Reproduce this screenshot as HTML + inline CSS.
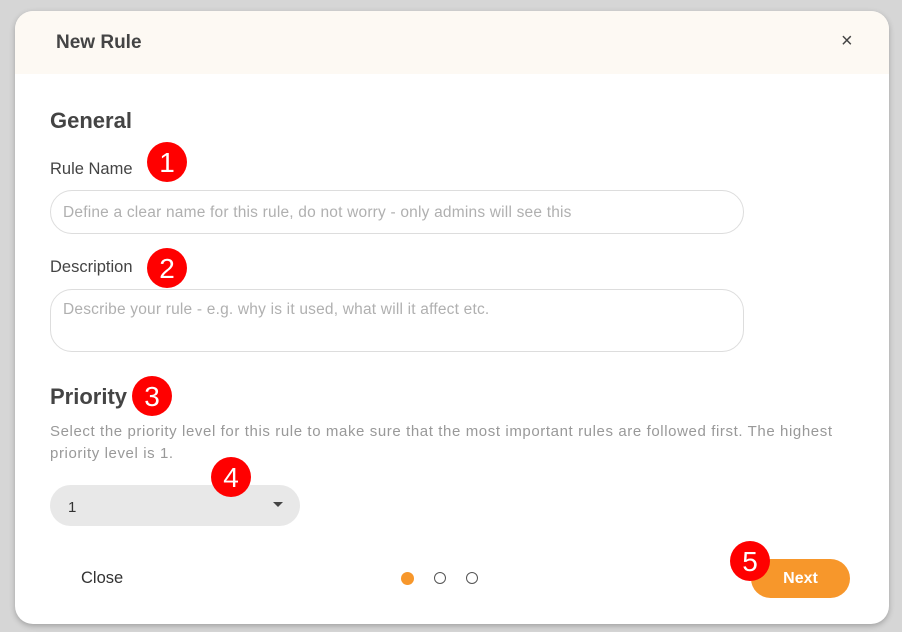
<!DOCTYPE html>
<html><head><style>
*{margin:0;padding:0;box-sizing:border-box}
body{width:902px;height:632px;background:#d6d6d6;font-family:"Liberation Sans",sans-serif;position:relative;overflow:hidden}
.modal{position:absolute;left:15px;top:11px;width:874px;height:613px;background:#fff;border-radius:18px;overflow:hidden;box-shadow:0 2px 6px rgba(0,0,0,.25)}
.hdr{position:absolute;left:0;top:0;width:100%;height:63px;background:#fdf9f3}
.abs{position:absolute}
.badge{position:absolute;width:40px;height:40px;border-radius:50%;background:#f00;color:#fff;font-size:28px;text-align:center;line-height:42px}
.inp{position:absolute;border:1px solid #ddd;border-radius:22px;color:#b0b0b0;font-size:15.5px;padding-left:12px;letter-spacing:0.2px}
</style></head><body>
<div class="modal">
<div class="hdr"></div>
<div class="abs" style="left:41px;top:21px;font-size:19px;font-weight:bold;color:#444">New Rule</div>
<div class="abs" style="left:826px;top:19px;font-size:20px;color:#444">×</div>
<div class="abs" style="left:35px;top:97px;font-size:22px;font-weight:bold;color:#444">General</div>
<div class="abs" style="left:35px;top:149px;font-size:16.5px;color:#444">Rule Name</div>
<div class="inp" style="left:35px;top:179px;width:694px;height:44px;line-height:44px">Define a clear name for this rule, do not worry - only admins will see this</div>
<div class="abs" style="left:35px;top:247px;font-size:16.5px;color:#444">Description</div>
<div class="inp" style="left:35px;top:278px;width:694px;height:63px;padding-top:11px">Describe your rule - e.g. why is it used, what will it affect etc.</div>
<div class="abs" style="left:35px;top:373px;font-size:22px;font-weight:bold;color:#444">Priority</div>
<div class="abs" style="left:35px;top:410px;width:800px;font-size:15px;line-height:22px;color:#999;letter-spacing:0.6px">Select the priority level for this rule to make sure that the most important rules are followed first. The highest priority level is 1.</div>
<div class="abs" style="left:35px;top:474px;width:250px;height:41px;background:#e8e8e8;border-radius:21px;font-size:15px;color:#333;padding:14px 0 0 18px">1</div>
<div class="abs" style="left:258px;top:491px;width:0;height:0;border-left:5px solid transparent;border-right:5px solid transparent;border-top:5px solid #444"></div>
<div class="abs" style="left:66px;top:558px;font-size:16.5px;color:#333">Close</div>
<div class="abs" style="left:386px;top:561px;width:13px;height:13px;border-radius:50%;background:#f7972b"></div>
<div class="abs" style="left:419px;top:561px;width:12px;height:12px;border-radius:50%;border:1.5px solid #555"></div>
<div class="abs" style="left:451px;top:561px;width:12px;height:12px;border-radius:50%;border:1.5px solid #555"></div>
<div class="abs" style="left:736px;top:548px;width:99px;height:39px;border-radius:20px;background:#f7972b;color:#fff;font-weight:bold;font-size:16px;text-align:center;line-height:39px">Next</div>
</div>
<div class="badge" style="left:147px;top:142px">1</div>
<div class="badge" style="left:147px;top:248px">2</div>
<div class="badge" style="left:132px;top:376px">3</div>
<div class="badge" style="left:211px;top:457px">4</div>
<div class="badge" style="left:730px;top:541px">5</div>
</body></html>
